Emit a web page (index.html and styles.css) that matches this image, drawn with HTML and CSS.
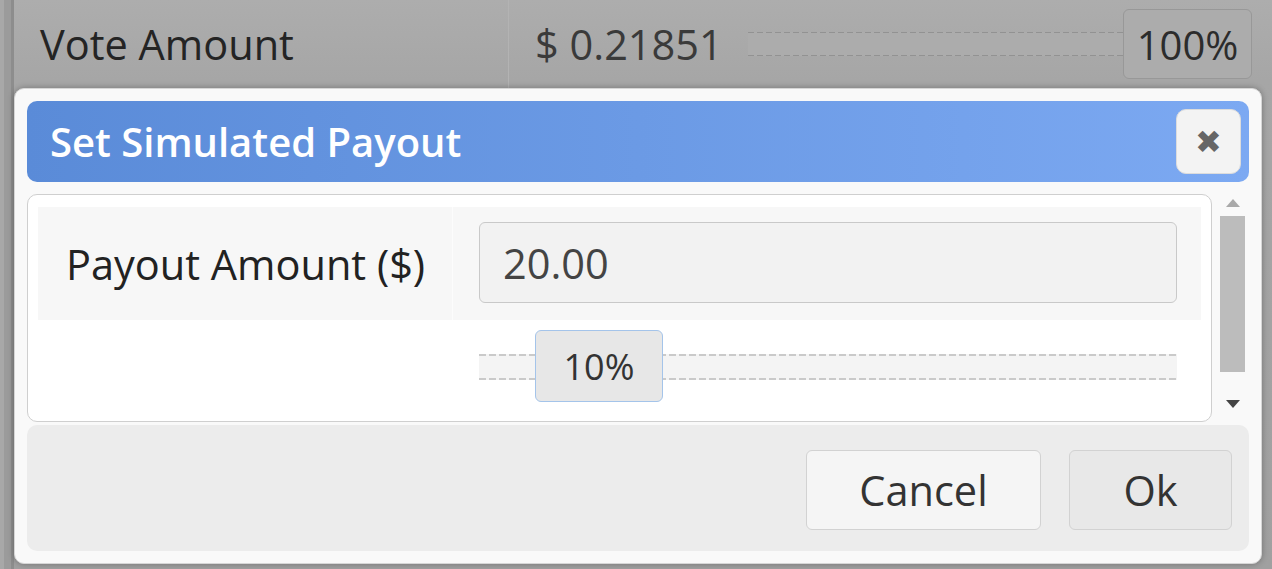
FILE: index.html
```html
<!DOCTYPE html>
<html>
<head>
<meta charset="utf-8">
<link rel="stylesheet" href="styles.css">
</head>
<body>
<div class="page">
  <div class="bg-row">
    <div class="bg-label">Vote Amount</div>
    <div class="bg-value">
      <span class="bg-amount">$ 0.21851</span>
      <div class="bg-track"></div>
      <div class="bg-btn">100%</div>
    </div>
  </div>
  <div class="dialog">
    <div class="titlebar">
      <span class="title">Set Simulated Payout</span>
      <button class="close">&#10006;</button>
    </div>
    <div class="content-wrap">
      <div class="panel">
        <div class="row row-input">
          <div class="cell-label">Payout Amount ($)</div>
          <div class="cell-value"><div class="input">20.00</div></div>
        </div>
        <div class="row row-slider">
          <div class="cell-label"></div>
          <div class="cell-value">
            <div class="track"><div class="handle">10%</div></div>
          </div>
        </div>
      </div>
      <div class="scrollbar">
        <span class="arrow up"></span>
        <div class="thumb"></div>
        <span class="arrow down"></span>
      </div>
    </div>
    <div class="footer">
      <button class="btn cancel">Cancel</button>
      <button class="btn ok">Ok</button>
    </div>
  </div>
</div>
</body>
</html>
```

FILE: styles.css
```css
html, body {
  margin: 0;
  padding: 0;
}
body {
  background: #9a9a9a;
  font-family: "Open Sans", "Noto Sans", sans-serif;
  overflow: hidden;
}
.page {
  width: 1272px;
  height: 569px;
  display: flex;
  flex-direction: column;
  background:
    linear-gradient(to right, #a8a8a8 0 4px, #9b9b9b 4px 11px, #8d8d8d 11px 14px, transparent 14px),
    linear-gradient(to bottom, #adadad 0, #a6a6a6 80px, #a0a0a0 100%);
  overflow: hidden;
}
.bg-row {
  height: 88px;
  flex: none;
  display: flex;
  align-items: center;
}
.bg-label {
  width: 468px;
  height: 100%;
  padding-left: 40px;
  display: flex;
  align-items: center;
  font-size: 41.5px;
  color: #242424;
  border-right: 1px solid #b3b3b3;
}
.bg-value {
  flex: 1;
  display: flex;
  align-items: center;
  padding-left: 26px;
  padding-right: 20px;
}
.bg-amount {
  font-size: 41.5px;
  color: #3a3a3a;
  width: 213px;
}
.bg-track {
  flex: 1;
  height: 24px;
  margin-right: -2px;
  background:
    repeating-linear-gradient(to right, #929292 0 6px, transparent 6px 9px) top / 100% 1px no-repeat,
    repeating-linear-gradient(to right, #929292 0 6px, transparent 6px 9px) bottom / 100% 1px no-repeat,
    #acacac;
}
.bg-btn {
  width: 127px;
  height: 68px;
  border: 1px solid #989898;
  border-radius: 6px;
  background: #acacac;
  font-size: 40px;
  color: #2c2c2c;
  display: flex;
  align-items: center;
  justify-content: center;
}
.dialog {
  margin-left: 14px;
  width: 1248px;
  height: 476px;
  box-sizing: border-box;
  border: 1px solid #d6d6d6;
  border-radius: 10px;
  background: #f9f9f9;
  padding: 12px;
  display: flex;
  flex-direction: column;
  box-shadow: 0 0 6px rgba(0, 0, 0, 0.3);
}
.titlebar {
  height: 81px;
  flex: none;
  box-sizing: border-box;
  border-radius: 10px;
  background: linear-gradient(to right, #5a8bd8, #7ca9f2);
  display: flex;
  align-items: center;
  padding: 0 8px 0 23px;
}
.title {
  color: #fff;
  font-size: 40px;
  font-weight: 600;
}
.close {
  margin-left: auto;
  width: 65px;
  height: 65px;
  box-sizing: border-box;
  border: 1px solid #dcdcdc;
  border-radius: 10px;
  background: #f3f3f3;
  color: #666;
  font-size: 32px;
  font-family: "DejaVu Sans", sans-serif;
  padding: 0;
  display: flex;
  align-items: center;
  justify-content: center;
}
.content-wrap {
  margin-top: 12px;
  height: 228px;
  flex: none;
  display: flex;
}
.panel {
  width: 1185px;
  box-sizing: border-box;
  background: #fff;
  border: 1px solid #cfcfcf;
  border-radius: 10px;
  padding: 12px 10px 0;
}
.row {
  display: grid;
  grid-template-columns: 414px 1fr;
}
.row-input {
  height: 113px;
  background: #f7f7f7;
}
.cell-label {
  display: flex;
  align-items: center;
  padding-left: 28px;
  font-size: 41.5px;
  color: #222;
}
.row-input .cell-value {
  border-left: 1px solid #fcfcfc;
  padding: 15px 24px 17px 26px;
}
.input {
  height: 81px;
  box-sizing: border-box;
  background: #f2f2f2;
  border: 1px solid #c9c9c9;
  border-radius: 6px;
  padding-left: 23px;
  display: flex;
  align-items: center;
  font-size: 41.5px;
  color: #444;
}
.row-slider {
  height: 92px;
}
.row-slider .cell-value {
  padding: 34px 24px 0 27px;
}
.track {
  position: relative;
  height: 26px;
  background:
    repeating-linear-gradient(to right, #cacaca 0 7px, transparent 7px 10px) top / 100% 2px no-repeat,
    repeating-linear-gradient(to right, #cacaca 0 7px, transparent 7px 10px) bottom / 100% 2px no-repeat,
    #f4f4f4;
}
.handle {
  position: absolute;
  left: 56px;
  top: -24px;
  width: 128px;
  height: 72px;
  box-sizing: border-box;
  background: #e7e7e7;
  border: 1px solid #a4c4ea;
  border-radius: 6px;
  display: flex;
  align-items: center;
  justify-content: center;
  font-size: 36px;
  color: #333;
}
.scrollbar {
  flex: 1;
  display: flex;
  flex-direction: column;
  align-items: center;
  padding-left: 4px;
}
.arrow {
  width: 0;
  height: 0;
  border-left: 7px solid transparent;
  border-right: 7px solid transparent;
}
.arrow.up {
  margin-top: 5px;
  border-bottom: 8px solid #a9a9a9;
}
.arrow.down {
  margin-top: 28px;
  border-top: 8px solid #444;
}
.thumb {
  margin-top: 9px;
  width: 25px;
  height: 156px;
  background: #bcbcbc;
}
.footer {
  margin-top: 3px;
  height: 126px;
  flex: none;
  box-sizing: border-box;
  background: #ececec;
  border-radius: 10px;
  display: flex;
  justify-content: flex-end;
  align-items: center;
  gap: 28px;
  padding: 4px 17px 0 0;
}
.btn {
  height: 80px;
  box-sizing: border-box;
  border: 1px solid #d2d2d2;
  border-radius: 6px;
  font-family: "Open Sans", "Noto Sans", sans-serif;
  font-size: 41.5px;
  color: #333;
  padding: 0;
}
.cancel {
  width: 235px;
  background: #f5f5f5;
}
.ok {
  width: 163px;
  background: #e8e8e8;
}
```
